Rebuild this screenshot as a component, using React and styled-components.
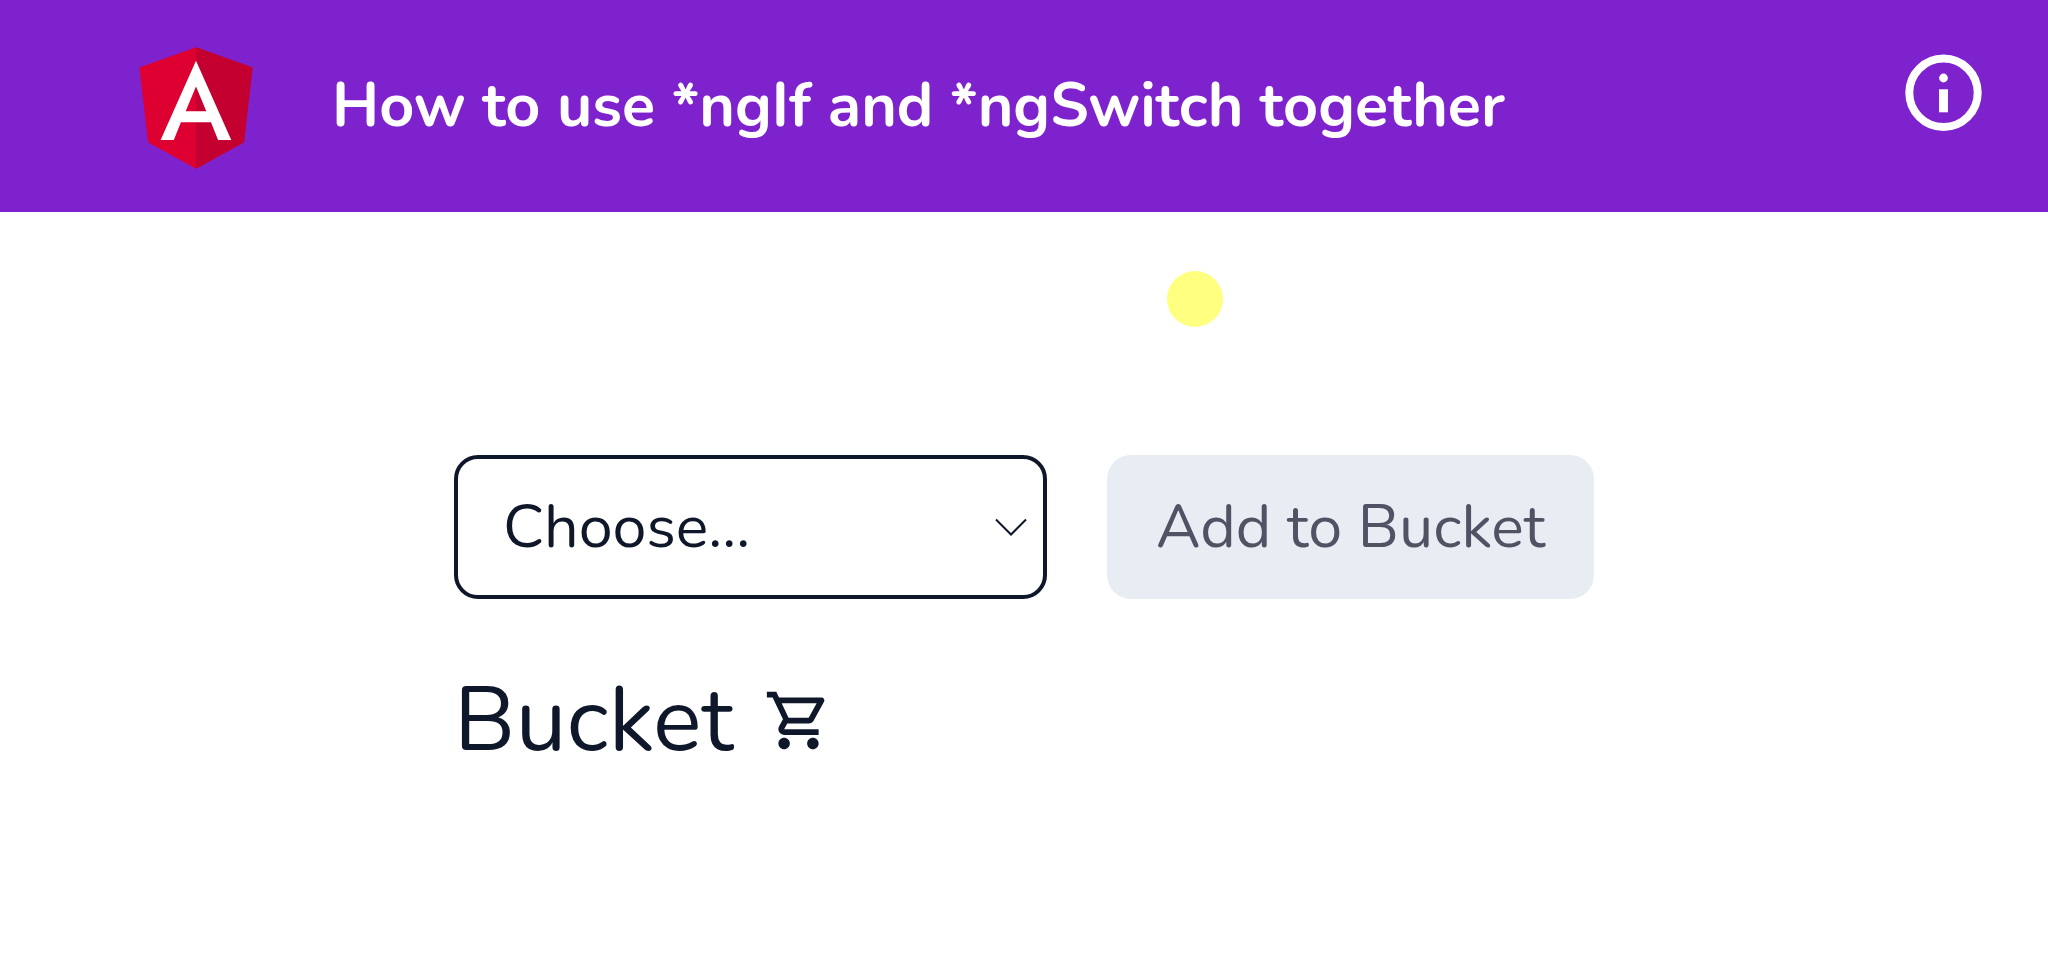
import React, { useState } from 'react';
import styled, { createGlobalStyle } from 'styled-components';
import { MdOutlineShoppingCart } from 'react-icons/md';

const fruits = ['Apple', 'Banana', 'Mango', 'Orange'];

const AngularLogo = () => (
  <Logo viewBox="0 0 250 250" role="img" aria-label="Angular">
    <path
      fill="#dd0031"
      d="M125 30 31.9 63.2l14.2 123.1L125 230l78.9-43.7 14.2-123.1z"
    />
    <path fill="#c3002f" d="M125 30v200l78.9-43.7 14.2-123.1z" />
    <path
      fill="#fff"
      d="M125 52.1 66.8 182.6h21.7l11.7-29.2h49.4l11.7 29.2H183L125 52.1zm17 83.3h-34l17-40.9z"
    />
  </Logo>
);

const Header = () => (
  <HeaderStyle>
    <AngularLogo />
    <Title>How to use *ngIf and *ngSwitch together</Title>
    <InfoButton type="button" aria-label="Info">
      <svg viewBox="0 0 78 78">
        <circle cx="38.5" cy="38.8" r="34.2" fill="none" stroke="#fff" strokeWidth="8" />
        <circle cx="38.5" cy="24" r="4.4" fill="#fff" />
        <rect x="34" y="35.3" width="9" height="23" fill="#fff" />
      </svg>
    </InfoButton>
  </HeaderStyle>
);

const App = () => {
  const [item, setItem] = useState('');

  return (
    <>
      <GlobalStyle />
      <Header />
      <Spotlight />
      <Main>
        <Form onSubmit={(e) => e.preventDefault()}>
          <SelectWrap>
            <Select
              aria-label="Choose a fruit"
              value={item}
              onChange={(e) => setItem(e.target.value)}
            >
              <option value="">Choose...</option>
              {fruits.map((fruit) => (
                <option key={fruit} value={fruit}>
                  {fruit}
                </option>
              ))}
            </Select>
            <Chevron viewBox="0 0 32 18">
              <path d="M1 1.5l15 15 15-15" />
            </Chevron>
          </SelectWrap>
          <AddButton type="submit" disabled={!item}>
            Add to Bucket
          </AddButton>
        </Form>
        <BucketTitle>
          Bucket
          <MdOutlineShoppingCart />
        </BucketTitle>
      </Main>
    </>
  );
};

const GlobalStyle = createGlobalStyle`
  * {
    box-sizing: border-box;
  }
  body {
    margin: 0;
    background: #fff;
    color: #0f172a;
    font-family: Nunito, Lato, sans-serif;
  }
  button,
  select {
    font: inherit;
    color: inherit;
  }
`;

const HeaderStyle = styled.header`
  display: flex;
  align-items: flex-start;
  padding: 29px 65px 29px 120px;
  background: #7e22ce;
  color: #fff;
`;

const Logo = styled.svg`
  flex: none;
  width: 152px;
  height: 152px;
`;

const Title = styled.h1`
  flex: 1;
  margin: 0 0 0 60px;
  font-size: 61px;
  line-height: 154px;
  font-weight: 700;
`;

const InfoButton = styled.button`
  flex: none;
  width: 78px;
  height: 78px;
  margin-top: 25px;
  padding: 0;
  border: 0;
  background: none;
  cursor: pointer;
  svg {
    display: block;
  }
`;

const Spotlight = styled.span`
  position: absolute;
  top: 271px;
  left: 57%;
  width: 56px;
  height: 56px;
  border-radius: 50%;
  background: #ffff80;
  pointer-events: none;
`;

const Main = styled.main`
  max-width: 1140px;
  margin: 0 auto;
  padding-top: 243px;
`;

const Form = styled.form`
  display: flex;
  gap: 60px;
`;

const SelectWrap = styled.div`
  flex: 1;
  display: grid;
  align-items: center;
  > * {
    grid-area: 1 / 1;
  }
`;

const Select = styled.select`
  width: 100%;
  height: 144px;
  padding: 0 45px;
  border: 4px solid #0f172a;
  border-radius: 24px;
  background: #fff;
  font-size: 61px;
  appearance: none;
`;

const Chevron = styled.svg`
  justify-self: end;
  width: 32px;
  height: 18px;
  margin-right: 20px;
  fill: none;
  stroke: #0f172a;
  stroke-width: 2;
  pointer-events: none;
`;

const AddButton = styled.button`
  padding: 0 49px;
  border: 0;
  border-radius: 24px;
  background: #e8edf4;
  color: #4f5364;
  font-size: 61px;
`;

const BucketTitle = styled.h2`
  display: flex;
  align-items: center;
  gap: 31px;
  margin: 61px 0 0;
  font-size: 91px;
  line-height: 120px;
  font-weight: 400;
  svg {
    width: 69px;
    height: 69px;
  }
`;

export default App;
